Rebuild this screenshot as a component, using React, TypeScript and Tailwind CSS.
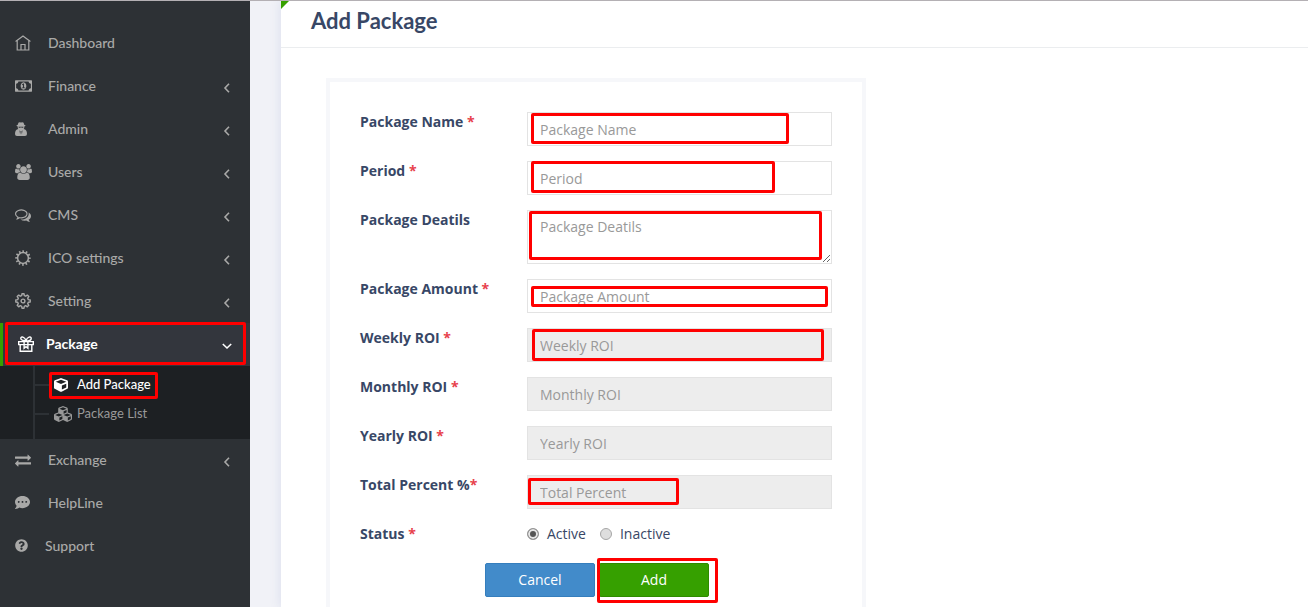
import React from "react";
import { FaCommentDots, FaCube, FaCubes, FaQuestionCircle } from "react-icons/fa";

type IconProps = { className?: string };

const HomeIcon = ({ className }: IconProps) => (
  <svg viewBox="0 0 16 16" className={className} fill="none" stroke="currentColor" strokeWidth="1.2">
    <path d="M0.6 6.6 8 0.9l7.4 5.7" />
    <path d="M2.2 5.6v9.4h11.6V5.6" />
    <path d="M6 15V9.5h4V15" />
  </svg>
);

const MoneyIcon = ({ className }: IconProps) => (
  <svg viewBox="0 0 1920 1792" className={className} fill="currentColor">
    <path d="M768 1152h384v-96h-128v-448h-114l-148 137 77 80q42-37 55-57h2v288h-128v96zm512-256q0 70-21 142t-59.5 134-101.5 101-138 39-138-39-101.5-101-59.5-134-21-142 21-142 59.5-134 101.5-101 138-39 138 39 101.5 101 59.5 134 21 142zm512 256v-512q-106 0-181-75t-75-181h-1152q0 106-75 181t-181 75v512q106 0 181 75t75 181h1152q0-106 75-181t181-75zm128-832v1152q0 26-19 45t-45 19h-1792q-26 0-45-19t-19-45v-1152q0-26 19-45t45-19h1792q26 0 45 19t19 45z" />
  </svg>
);

const AgentIcon = ({ className }: IconProps) => (
  <svg viewBox="0 0 12 14" className={className} fill="currentColor" fillRule="evenodd">
    <path d="M3.4 0.8Q4 -0.3 6 0.4 8 -0.3 8.6 0.8L9.2 2.7Q10.6 3.1 10.6 3.6 10.6 4.1 9.3 4.5 9.4 6.2 8.7 7.1 12 7.8 12 12 12 14 10 14H2Q0 14 0 12 0 7.8 3.3 7.1 2.6 6.2 2.7 4.5 1.4 4.1 1.4 3.6 1.4 3.1 2.8 2.7zM3.5 4.8 3.8 5.7H5.4L6 5.1 6.6 5.7H8.2L8.5 4.8zM4.5 8.2 5.1 12.6 5.6 9.6zM7.5 8.2 6.4 9.6 6.9 12.6z" />
  </svg>
);

const UsersIcon = ({ className }: IconProps) => (
  <svg viewBox="0 0 1920 1792" className={className} fill="currentColor">
    <path d="M593 896q-162 5-265 128h-134q-82 0-138-40.5t-56-118.5q0-353 124-353 6 0 43.5 21t97.5 42.5 119 21.5q67 0 133-23-5 37-5 66 0 139 81 256zm1071 637q0 120-73 189.5t-194 69.5h-874q-121 0-194-69.5t-73-189.5q0-53 3.5-103.5t14-109 26.5-108.5 43-97.5 62-81 85.5-53.5 111.5-20q10 0 43 21.5t73 48 107 48 135 21.5 135-21.5 107-48 73-48 43-21.5q61 0 111.5 20t85.5 53.5 62 81 43 97.5 26.5 108.5 14 109 3.5 103.5zm-1024-1277q0 106-75 181t-181 75-181-75-75-181 75-181 181-75 181 75 75 181zm704 384q0 159-112.5 271.5t-271.5 112.5-271.5-112.5-112.5-271.5 112.5-271.5 271.5-112.5 271.5 112.5 112.5 271.5zm576 225q0 78-56 118.5t-138 40.5h-134q-103-123-265-128 81-117 81-256 0-29-5-66 66 23 133 23 59 0 119-21.5t97.5-42.5 43.5-21q124 0 124 353zm-128-609q0 106-75 181t-181 75-181-75-75-181 75-181 181-75 181 75 75 181z" />
  </svg>
);

const CommentsIcon = ({ className }: IconProps) => (
  <svg viewBox="0 0 1792 1792" className={className} fill="currentColor">
    <path d="M704 384q-153 0-286 52t-211.5 141-78.5 191q0 82 53 158t149 132l97 56-35 84q34-20 62-39l44-31 53 10q78 14 153 14 153 0 286-52t211.5-141 78.5-191-78.5-191-211.5-141-286-52zm0-128q191 0 353.5 68.5t256.5 186.5 94 257-94 257-256.5 186.5-353.5 68.5q-86 0-176-16-124 88-278 128-36 9-86 16h-3q-11 0-20.5-8t-11.5-21q-1-3-1-6.5t.5-6.5 2-6l2.5-5 3.5-5.5 4-5 4.5-5 4-4.5q5-6 23-25t26-29.5 22.5-29 25-38.5 20.5-44q-124-72-195-177t-71-224q0-139 94-257t256.5-186.5 353.5-68.5zm822 1169q10 24 20.5 44t25 38.5 22.5 29 26 29.5 23 25q1 1 4 4.5t4.5 5 4 5 3.5 5.5l2.5 5 2 6 .5 6.5-1 6.5q-3 14-13 22t-22 7q-50-7-86-16-154-40-278-128-90 16-176 16-271 0-472-132 58 4 88 4 161 0 309-45t264-129q125-92 192-212t67-254q0-77-23-152 129 71 204 178t75 230q0 120-71 224.5t-195 176.5z" />
  </svg>
);

const SunIcon = ({ className }: IconProps) => (
  <svg viewBox="0 0 16 16" className={className} fill="none" stroke="currentColor">
    <circle cx="8" cy="8" r="5.4" strokeWidth="1.5" />
    <circle cx="8" cy="8" r="6.7" strokeWidth="2" strokeDasharray="1.6 1.908" strokeDashoffset="0.8" />
  </svg>
);

const GearIcon = ({ className }: IconProps) => (
  <svg viewBox="0 0 16 16" className={className} fill="none" stroke="currentColor" strokeWidth="1.4" strokeLinejoin="round">
    <path d="M6.7 2.6 7 0.7h2l.3 1.9 1.4.6 1.6-1.1 1.5 1.5-1.1 1.6.6 1.4 1.9.4v2l-1.9.3-.6 1.4 1.1 1.6-1.5 1.5-1.6-1.1-1.4.6-.3 1.9H7l-.3-1.9-1.4-.6-1.6 1.1-1.5-1.5 1.1-1.6-.6-1.4L.8 9V7l1.9-.4.6-1.4-1.1-1.6 1.5-1.5 1.6 1.1z" />
    <circle cx="8" cy="8" r="1.9" />
  </svg>
);

const GiftIcon = ({ className }: IconProps) => (
  <svg viewBox="0 0 16 16" className={className} fill="none" stroke="currentColor" strokeWidth="1.4">
    <path d="M0.7 5.6h14.6v3H0.7zM2.2 8.6v6.7h11.6V8.6" />
    <path d="M6.1 5.4v6.8L8 10.6l1.9 1.6V5.4" />
    <path d="M8 4.9C6.4 4.9 2.8 4.4 2.8 2.4 2.8 0.2 6.8 0.4 8 4.9zM8 4.9c1.6 0 5.2-.5 5.2-2.5C13.2.2 9.2.4 8 4.9z" />
  </svg>
);

const ExchangeIcon = ({ className }: IconProps) => (
  <svg viewBox="0 0 1792 1792" className={className} fill="currentColor">
    <path d="M1792 1184v192q0 13-9.5 22.5t-22.5 9.5h-1376v192q0 13-9.5 22.5t-22.5 9.5q-12 0-24-10l-319-320q-9-9-9-22 0-14 9-23l320-320q9-9 23-9 13 0 22.5 9.5t9.5 22.5v192h1376q13 0 22.5 9.5t9.5 22.5zm0-544q0 14-9 23l-320 320q-9 9-23 9-13 0-22.5-9.5t-9.5-22.5v-192h-1376q-13 0-22.5-9.5t-9.5-22.5v-192q0-13 9.5-22.5t22.5-9.5h1376v-192q0-14 9-23t23-9q12 0 24 10l319 319q9 9 9 23z" />
  </svg>
);

const Chevron = ({ down }: { down?: boolean }) => (
  <svg viewBox="0 0 10 10" className="mt-1 ml-auto size-[10px]" fill="none" stroke="currentColor" strokeWidth="1.6">
    <path d={down ? "M0.8 3 5 7 9.2 3" : "M7 0.8 3 5 7 9.2"} />
  </svg>
);

const Mark = ({ className }: { className: string }) => (
  <span aria-hidden="true" className={`pointer-events-none absolute rounded-[2px] border-3 border-[#ff0000] ${className}`} />
);

type NavItem = { label: string; icon: React.ReactNode; arrow?: boolean; gap?: string };

const before: NavItem[] = [
  { label: "Dashboard", icon: <HomeIcon className="size-4" /> },
  { label: "Finance", icon: <MoneyIcon className="h-4 w-[17px]" />, arrow: true },
  { label: "Admin", icon: <AgentIcon className="h-[14px] w-3" />, arrow: true },
  { label: "Users", icon: <UsersIcon className="h-4 w-[17px]" />, arrow: true },
  { label: "CMS", icon: <CommentsIcon className="size-4" />, arrow: true },
  { label: "ICO settings", icon: <SunIcon className="size-4" />, arrow: true },
  { label: "Setting", icon: <GearIcon className="size-4" />, arrow: true },
];

const after: NavItem[] = [
  { label: "Exchange", icon: <ExchangeIcon className="size-4" />, arrow: true },
  { label: "HelpLine", icon: <FaCommentDots className="size-[15px]" /> },
  { label: "Support", icon: <FaQuestionCircle className="size-[13px]" />, gap: "w-[30px]" },
];

const NavRow = ({ label, icon, arrow, gap = "w-[33px]" }: NavItem) => (
  <li>
    <a href="#" className="flex h-[43px] items-center pr-[18px] pb-[2px] pl-[15px]">
      <span className={`flex shrink-0 ${gap}`}>{icon}</span>
      {label}
      {arrow && <Chevron />}
    </a>
  </li>
);

type FieldProps = {
  id: string;
  label: string;
  placeholder: string;
  required?: boolean;
  tight?: boolean;
  disabled?: boolean;
  multiline?: boolean;
  mark?: string;
};

const fields: FieldProps[] = [
  { id: "name", label: "Package Name", placeholder: "Package Name", required: true, mark: "left-1 top-px h-[31px] w-[258px]" },
  { id: "period", label: "Period", placeholder: "Period", required: true, mark: "left-1 top-0 h-8 w-[244px]" },
  { id: "details", label: "Package Deatils", placeholder: "Package Deatils", multiline: true, mark: "left-[2px] top-px h-[49px] w-[293px]" },
  { id: "amount", label: "Package Amount", placeholder: "Package Amount", required: true, mark: "left-1 top-[7px] h-[21px] w-[297px]" },
  { id: "weekly", label: "Weekly ROI", placeholder: "Weekly ROI", required: true, disabled: true, mark: "left-[5px] top-px h-8 w-[292px]" },
  { id: "monthly", label: "Monthly ROI", placeholder: "Monthly ROI", required: true, disabled: true },
  { id: "yearly", label: "Yearly ROI", placeholder: "Yearly ROI", required: true, disabled: true },
  { id: "percent", label: "Total Percent %", placeholder: "Total Percent", required: true, tight: true, disabled: true, mark: "left-px top-[3px] h-[27px] w-[151px]" },
];

const control =
  "block w-full border border-[#e3e3e3] bg-white px-3 py-[6px] leading-5 text-[#555] outline-none placeholder:text-[#999] disabled:bg-[#ededed]";

const Star = () => <span className="text-[#e7414c]">*</span>;

const Field = ({ id, label, placeholder, required, tight, disabled, multiline, mark }: FieldProps) => (
  <div className="grid grid-cols-[167px_1fr]">
    <label htmlFor={id} className="leading-5 font-bold">
      {label}
      {required && !tight && " "}
      {required && <Star />}
    </label>
    <div className="relative">
      {multiline ? (
        <textarea id={id} rows={2} placeholder={placeholder} className={`${control} resize`} />
      ) : (
        <input id={id} type="text" placeholder={placeholder} disabled={disabled} className={`${control} h-[34px]`} />
      )}
      {mark && <Mark className={mark} />}
    </div>
  </div>
);

const radio =
  "size-3 appearance-none rounded-full border border-[#a6a6a6] bg-[#dedede] checked:border-[#999] checked:bg-[#555] checked:shadow-[inset_0_0_0_2px_#e6e6e6]";

export default function App() {
  return (
    <div className="flex h-screen overflow-hidden border-t border-[#b4b0b4] bg-[#f1f2f7] font-['Open_Sans',sans-serif] text-sm text-[#384766]">
      <nav className="w-[250px] shrink-0 bg-[#2d3135] pt-[21px] font-['Lato',sans-serif] font-medium text-[#a9a9a8]">
        <ul>
          {before.map((item) => (
            <NavRow key={item.label} {...item} />
          ))}
          <li>
            <div className="relative">
              <a href="#" className="flex h-[43px] items-center border-l-3 border-[#36a000] bg-[#33363d] pr-[18px] pb-[2px] pl-[15px] font-bold text-white">
                <span className="flex w-7 shrink-0">
                  <GiftIcon className="size-4" />
                </span>
                Package
                <Chevron down />
              </a>
              <Mark className="-top-px left-[5px] h-[43px] w-[241px]" />
            </div>
            <div className="bg-[#1d2023] pl-[33px] text-[13px]">
              <ul className="border-l-2 border-[#2d3135] pt-1 pb-[11px]">
                <li className="relative flex h-[29px] items-center">
                  <span className="h-[2px] w-[14px] bg-[#2d3135]" />
                  <a href="#" className="flex items-center pl-[5px] text-white">
                    <FaCube className="mr-[9px] size-[14px]" />
                    Add Package
                  </a>
                  <Mark className="top-[2px] left-[14px] h-[27px] w-[109px]" />
                </li>
                <li className="flex h-[29px] items-center">
                  <span className="h-[2px] w-[14px] bg-[#2d3135]" />
                  <a href="#" className="flex items-center pl-[5px] font-normal text-[#999]">
                    <FaCubes className="mr-[5px] size-[18px]" />
                    Package List
                  </a>
                </li>
              </ul>
            </div>
          </li>
          {after.map((item) => (
            <NavRow key={item.label} {...item} />
          ))}
        </ul>
      </nav>

      <main className="ml-[31px] min-w-0 flex-1 overflow-y-auto bg-white shadow-[0_0_10px_1px_#dcdfee] [scrollbar-width:none]">
        <header className="relative flex h-[47px] items-center border-b border-[#ebedef] pb-[6px] pl-[30px]">
          <svg viewBox="0 0 8 8" className="absolute top-0 left-0 size-2">
            <path d="M0 0h8L0 8z" fill="#36a000" />
          </svg>
          <h1 className="font-['Lato',sans-serif] text-[22px] leading-7 font-bold">Add Package</h1>
        </header>

        <form className="mt-[30px] ml-[45px] flex max-w-[540px] flex-col gap-[15px] border-4 border-[#f6f7fa] p-[30px]" onSubmit={(e) => e.preventDefault()}>
          {fields.map((field) => (
            <Field key={field.id} {...field} />
          ))}
          <fieldset className="grid h-6 grid-cols-[167px_1fr]">
            <span className="leading-5 font-bold">
              Status <Star />
            </span>
            <div className="flex items-end gap-[14px]">
              <label className="flex items-center gap-2">
                <input type="radio" name="status" defaultChecked className={radio} />
                Active
              </label>
              <label className="flex items-center gap-2">
                <input type="radio" name="status" className={radio} />
                Inactive
              </label>
            </div>
          </fieldset>
          <div className="flex justify-center gap-1 pl-[2px]">
            <button type="button" className="h-[34px] w-[110px] rounded-[2px] border border-[#357ebd] bg-[#428bca] text-white">
              Cancel
            </button>
            <div className="relative">
              <button type="submit" className="h-[34px] w-[110px] rounded-[2px] border border-[#2f8b00] bg-[#36a000] text-white">
                Add
              </button>
              <Mark className="-top-[5px] -left-[2px] h-[45px] w-[121px]" />
            </div>
          </div>
        </form>
      </main>
    </div>
  );
}
